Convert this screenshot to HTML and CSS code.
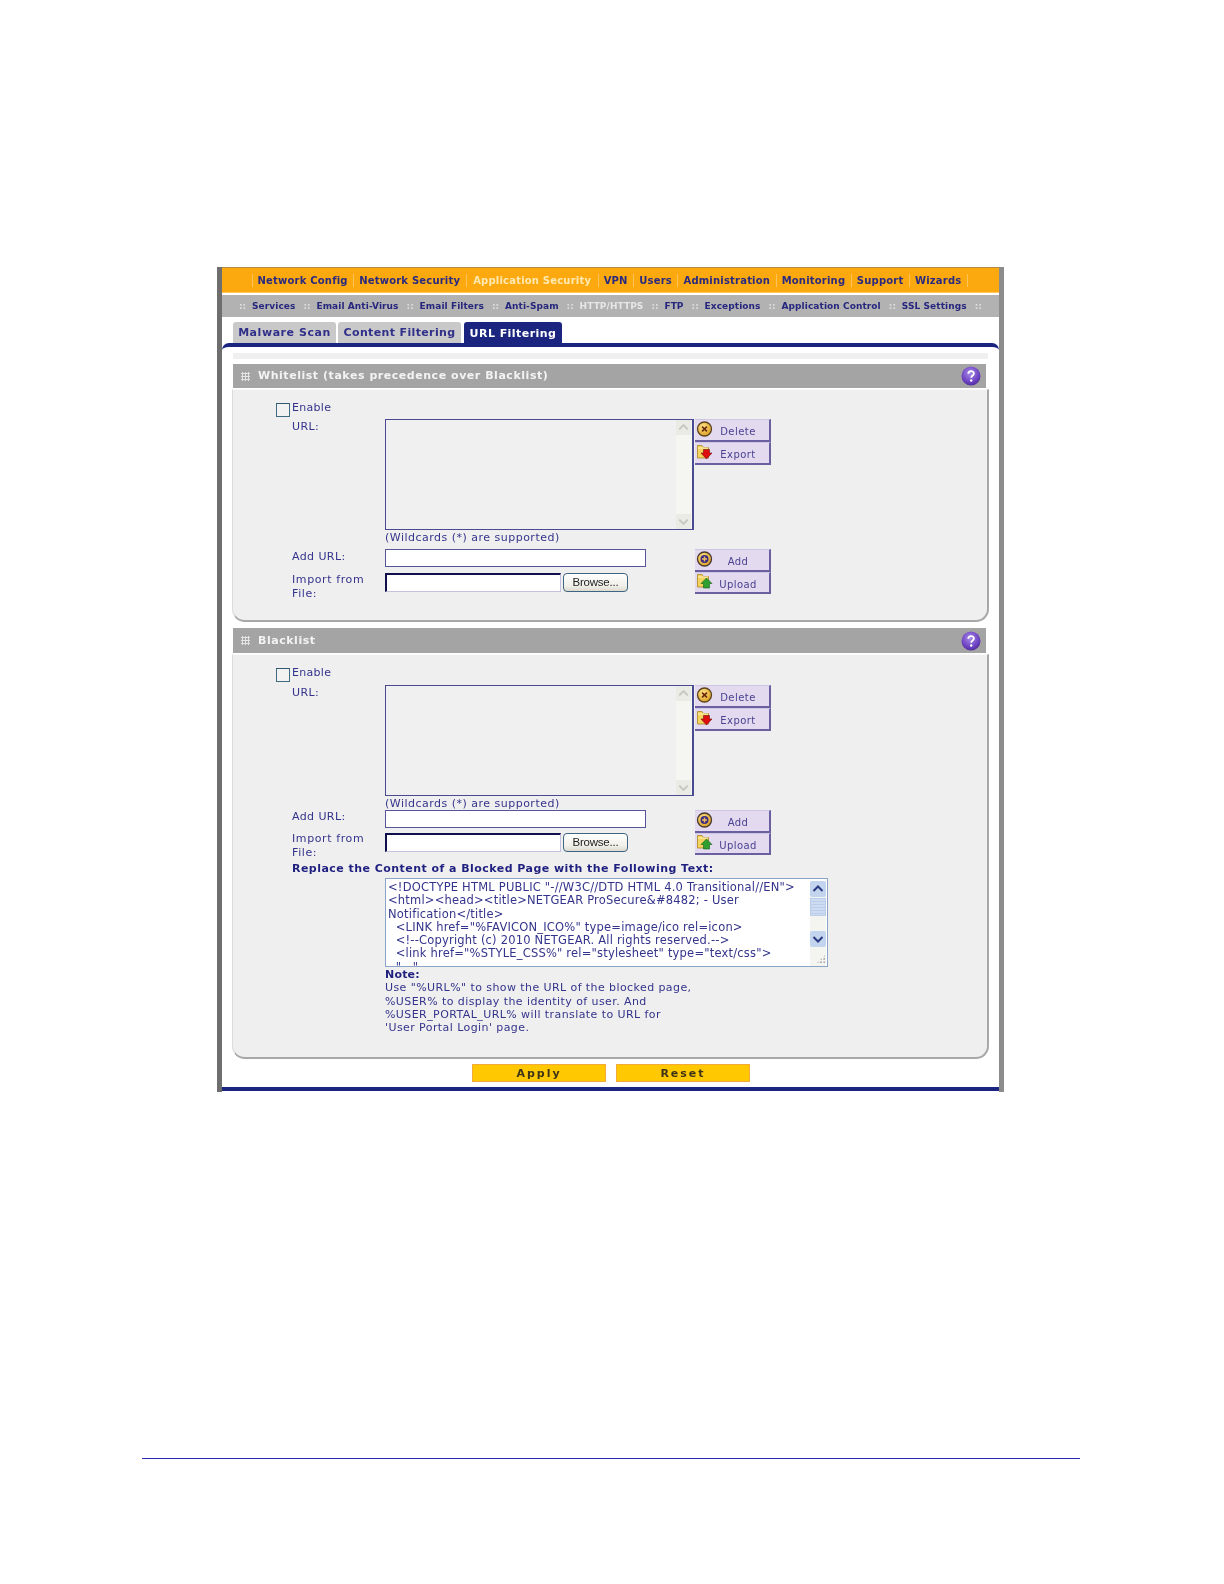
FILE: index.html
```html
<!DOCTYPE html>
<html lang="en">
<head>
<meta charset="utf-8">
<title>URL Filtering</title>
<link rel="stylesheet" href="styles.css">
</head>
<body>
<svg class="defs" width="0" height="0" aria-hidden="true">
  <defs>
    <radialGradient id="coin" cx="40%" cy="35%" r="70%"><stop offset="0" stop-color="#ffe58a"/><stop offset="1" stop-color="#d99a1c"/></radialGradient>
    <radialGradient id="orb" cx="45%" cy="35%" r="70%"><stop offset="0" stop-color="#a98be8"/><stop offset="0.7" stop-color="#6a3fc0"/><stop offset="1" stop-color="#4a2a90"/></radialGradient>
    <symbol id="i-x" viewBox="0 0 16 16"><circle cx="8" cy="8" r="7" fill="url(#coin)" stroke="#5a4420" stroke-width="1.3"/><path d="M5.600 5.600l4.800 4.800M10.400 5.600l-4.800 4.800" stroke="#6a2a10" stroke-width="1.600"/></symbol>
    <symbol id="i-plus" viewBox="0 0 16 16"><circle cx="8" cy="8" r="7" fill="url(#coin)" stroke="#4a3a30" stroke-width="1.3"/><circle cx="8" cy="8" r="4" fill="#3a2a80"/><path d="M8 5.500v5M5.500 8h5" stroke="#f2c060" stroke-width="1.400"/></symbol>
    <symbol id="i-export" viewBox="0 0 16 16"><path d="M1 1.500h4.500L7 3.500h5V14H1z" fill="#f4d35e" stroke="#a98420" stroke-width=".8"/><path d="M1.500 4h10" stroke="#fff4c0"/><path d="M7 5.500h6V9h2.500L10 15 4.500 9H7z" fill="#e00f0f" stroke="#701010" stroke-width=".6"/></symbol>
    <symbol id="i-upload" viewBox="0 0 16 16"><path d="M1 1.500h4.500L7 3.500h5V14H1z" fill="#f4d35e" stroke="#a98420" stroke-width=".8"/><path d="M1.500 4h10" stroke="#fff4c0"/><path d="M10 5l5.500 5.500H13V15H7v-4.500H4.500z" fill="#2fa02f" stroke="#146014" stroke-width=".6"/></symbol>
    <symbol id="i-help" viewBox="0 0 20 20"><circle cx="10" cy="10" r="9.500" fill="url(#orb)"/><path d="M7.300 7.700c0-3.300 5.600-3.300 5.600-.2 0 2-2.700 2.100-2.700 4.300" fill="none" stroke="#fff" stroke-width="1.800"/><circle cx="10.200" cy="14.500" r="1.200" fill="#fff"/></symbol>
    <symbol id="i-up" viewBox="0 0 16 16"><path d="M3.500 10L8 5.500l4.500 4.500" fill="none" stroke="currentColor" stroke-width="2"/></symbol>
    <symbol id="i-down" viewBox="0 0 16 16"><path d="M3.500 6L8 10.500 12.500 6" fill="none" stroke="currentColor" stroke-width="2"/></symbol>
  </defs>
</svg>

<main class="frame">
  <nav class="menu">
    <a>Network Config</a><a>Network Security</a><a class="on">Application Security</a><a>VPN</a><a>Users</a><a>Administration</a><a>Monitoring</a><a>Support</a><a>Wizards</a>
  </nav>
  <nav class="submenu">
    <i>::</i><a>Services</a><i>::</i><a>Email Anti-Virus</a><i>::</i><a>Email Filters</a><i>::</i><a>Anti-Spam</a><i>::</i><a class="on">HTTP/HTTPS</a><i>::</i><a>FTP</a><i>::</i><a>Exceptions</a><i>::</i><a>Application Control</a><i>::</i><a>SSL Settings</a><i>::</i>
  </nav>
  <div class="tabs">
    <a class="tab t1">Malware Scan</a><a class="tab t2">Content Filtering</a><a class="tab active">URL Filtering</a>
  </div>

  <section class="panel">
    <div class="strip"></div>

    <header class="sec-head"><span class="grip"></span><h2>Whitelist (takes precedence over Blacklist)</h2><svg class="help"><use href="#i-help"/></svg></header>
    <div class="sec-body white">
      <label class="enable"><span class="check"></span>Enable</label>
      <div class="form">
        <div class="lbl">URL:</div>
        <div class="list"><div class="bar"><svg class="cap"><use href="#i-up"/></svg><svg class="cap"><use href="#i-down"/></svg></div></div>
        <div class="btns">
          <a class="btn"><svg class="ico"><use href="#i-x"/></svg><span>Delete</span></a>
          <a class="btn"><svg class="ico"><use href="#i-export"/></svg><span>Export</span></a>
        </div>
        <div class="wild">(Wildcards (*) are supported)</div>
        <div class="lbl add-l">Add URL:</div>
        <div class="field"><div class="inp add"></div></div>
        <a class="btn solo"><svg class="ico"><use href="#i-plus"/></svg><span>Add</span></a>
        <div class="lbl imp-l">Import from File:</div>
        <div class="field filerow"><div class="inp file"></div><a class="browse">Browse...</a></div>
        <a class="btn up"><svg class="ico"><use href="#i-upload"/></svg><span>Upload</span></a>
      </div>
    </div>

    <header class="sec-head second"><span class="grip"></span><h2>Blacklist</h2><svg class="help"><use href="#i-help"/></svg></header>
    <div class="sec-body black">
      <label class="enable"><span class="check"></span>Enable</label>
      <div class="form">
        <div class="lbl">URL:</div>
        <div class="list"><div class="bar"><svg class="cap"><use href="#i-up"/></svg><svg class="cap"><use href="#i-down"/></svg></div></div>
        <div class="btns">
          <a class="btn"><svg class="ico"><use href="#i-x"/></svg><span>Delete</span></a>
          <a class="btn"><svg class="ico"><use href="#i-export"/></svg><span>Export</span></a>
        </div>
        <div class="wild tight">(Wildcards (*) are supported)</div>
        <div class="lbl add-l">Add URL:</div>
        <div class="field"><div class="inp add"></div></div>
        <a class="btn solo"><svg class="ico"><use href="#i-plus"/></svg><span>Add</span></a>
        <div class="lbl imp-l">Import from File:</div>
        <div class="field filerow"><div class="inp file"></div><a class="browse">Browse...</a></div>
        <a class="btn up"><svg class="ico"><use href="#i-upload"/></svg><span>Upload</span></a>
      </div>
      <h3 class="replace">Replace the Content of a Blocked Page with the Following Text:</h3>
      <div class="text-wrap">
        <div class="textarea">
          <pre class="code">&lt;!DOCTYPE HTML PUBLIC "-//W3C//DTD HTML 4.0 Transitional//EN"&gt;
&lt;html&gt;&lt;head&gt;&lt;title&gt;NETGEAR ProSecure&amp;#8482; - User
Notification&lt;/title&gt;
  &lt;LINK href="%FAVICON_ICO%" type=image/ico rel=icon&gt;
  &lt;!--Copyright (c) 2010 NETGEAR. All rights reserved.--&gt;
  &lt;link href="%STYLE_CSS%" rel="stylesheet" type="text/css"&gt;
  "   "</pre>
          <div class="sbar">
            <svg class="sb-btn"><use href="#i-up"/></svg>
            <span class="sb-thumb"></span>
            <svg class="sb-btn dn"><use href="#i-down"/></svg>
            <span class="sb-grip"></span>
          </div>
        </div>
        <div class="note">
          <strong>Note:</strong><br>
          Use "%URL%" to show the URL of the blocked page,<br>
          %USER% to display the identity of user. And<br>
          %USER_PORTAL_URL% will translate to URL for<br>
          'User Portal Login' page.
        </div>
      </div>
    </div>

    <div class="actions"><a class="action">Apply</a><a class="action">Reset</a></div>
  </section>
</main>
<hr class="rule">
</body>
</html>
```
FILE: styles.css
```css
* { box-sizing: border-box; }
html, body { margin: 0; padding: 0; background: #fff; }
body { font-family: "DejaVu Sans", Verdana, sans-serif; color: #34348c; width: 1224px; height: 1584px; overflow: hidden; }
.defs { position: absolute; }

.frame { width: 787px; height: 825px; margin: 267px 0 0 217px; border-left: 5px solid #6e6e6e; border-right: 5px solid #8c8c8c; background: #fff; filter: blur(.45px); }

.menu { display: flex; height: 26px; padding: 1px 0 0 29.500px; background: #fba90f; align-items: center; border-top: 1px solid #b08a40; border-bottom: 1px solid #ffc860; }
.menu a { font-size: 10px; font-weight: 700; letter-spacing: .2px; color: #2a2a80; padding: 0 5.500px 0 5px; height: 13px; line-height: 13px; border-left: 1px solid #fdc45a; white-space: nowrap; }
.menu a:last-child { border-right: 1px solid #fdc45a; }
.menu a.on { color: #ffe9b0; padding: 0 6.500px 0 6.500px; }

.submenu { display: flex; align-items: center; gap: 8px; height: 22px; margin-top: 2px; padding-left: 17px; background: #b2b2b2; white-space: nowrap; }
.submenu a { font-size: 9px; font-weight: 700; letter-spacing: .08px; color: #26267e; }
.submenu a.on { color: #e6e6e6; }
.submenu i { font-style: normal; font-size: 9px; font-weight: 700; color: #dcdcdc; width: 5px; }

.tabs { display: flex; gap: 2px; height: 25px; margin-top: 5px; padding-left: 11px; position: relative; z-index: 1; }
.tab { height: 21px; padding-top: 4px; border-radius: 3px 3px 0 0; font-size: 11px; font-weight: 700; letter-spacing: .55px; text-align: center; background: #c9c9c9; color: #30308a; white-space: nowrap; }
.t1 { width: 103px; }
.t2 { width: 123px; letter-spacing: .36px; }
.tab.active { width: 98px; height: 25px; padding-top: 5px; background: #1b2580; color: #fff; margin-left: 1px; letter-spacing: .45px; }

.panel { width: 777px; height: 748px; margin-top: -4px; padding: 0 11px; border-top: 4px solid #1b2580; border-bottom: 4px solid #1b2580; border-radius: 7px 7px 0 0; background: #fff; }
.strip { height: 6px; margin: 6px 0 5px; background: #f0f0f0; width: 755px; }

.sec-head { display: flex; align-items: center; width: 753px; height: 24px; background: #a4a4a4; padding: 0 5px 0 8px; }
.sec-head.second { margin-top: 6px; height: 25px; }
.sec-head h2 { margin: 0 0 1px 8px; flex: 1; font-size: 11px; font-weight: 700; letter-spacing: .54px; color: #f3f3f3; }
.grip { width: 9px; height: 9px; background-image: radial-gradient(#e4e4e4 1px, transparent 1.100px); background-size: 3px 3px; }
.help { width: 20px; height: 20px; }

.sec-body { width: 757px; margin: 1px 0 0 -1px; padding: 11px 0 0 43px; background: #efefef; border: 1px solid #dcdcdc; border-top: 1px solid #fafafa; border-right: 2px solid #a8a8a8; border-bottom: 2px solid #a8a8a8; border-radius: 0 0 13px 13px; }
.sec-body.white { height: 233px; }
.sec-body.black { height: 405px; }

.enable { display: flex; align-items: flex-start; height: 14px; font-size: 11px; line-height: 14px; letter-spacing: .3px; }
.check { width: 14px; height: 14px; margin: 2px 2px 0 0; background: #f2f2f2; border: 1px solid #3f6a80; border-top-color: #2f5a70; }

.form { display: grid; grid-template-columns: 93px 309px 77px; margin: 4px 0 0 16px; align-items: start; }
.black .form { margin-top: 5px; }
.lbl { font-size: 11px; line-height: 14px; letter-spacing: .4px; padding-top: 1px; }
.imp-l { padding-top: 0; width: 84px; letter-spacing: .6px; }
.black .add-l { margin-top: -1px; }
.black .imp-l { margin-top: -2px; }

.list { display: flex; justify-content: flex-end; height: 111px; background: #f0f0f0; border: 1px solid #4a4a92; border-right-width: 2px; }
.bar { display: flex; flex-direction: column; justify-content: space-between; width: 16px; padding-right: 1px; background: #f5f5f2; }
.cap { display: block; width: 15px; height: 15px; background: #ebebe6; color: #c6c6c2; }

.btns { display: flex; flex-direction: column; padding-left: 1px; }
.btn { display: flex; align-items: center; height: 23px; padding: 0 0 0 1px; background: #e3daf0; border-right: 2px solid #6a5fa0; border-bottom: 2px solid #6a5fa0; border-top: 1px solid #cfc6e4; font-size: 10px; letter-spacing: .45px; color: #4b418f; }
.btn span { flex: 1; text-align: center; padding: 3px 6px 0 0; }
.btn .ico { width: 17px; height: 16px; margin-top: -3px; }
.form > .btn { margin-left: 1px; }
.form > .up { margin-top: -1px; height: 22px; }

.wild { grid-column: 2 / 4; height: 19px; font-size: 11px; line-height: 14px; letter-spacing: .49px; padding-top: 1px; }
.wild.tight { height: 14px; }

.field { min-height: 24px; }
.inp { background: #fff; }
.add { width: 261px; height: 18px; border: 1.500px solid #55559a; }
.filerow { display: flex; gap: 2px; }
.black .filerow { margin-top: -1px; }
.file { width: 176px; height: 19px; border: 1px solid #c2c2de; border-top: 2px solid #10104a; border-left: 2px solid #10104a; }
.browse { width: 65px; height: 19px; font-family: "Liberation Sans", Arial, sans-serif; font-size: 11.500px; line-height: 17px; letter-spacing: -.2px; text-align: center; color: #222; border: 1.500px solid #3d6480; border-radius: 4px; background: linear-gradient(#fff, #f0efe8 70%, #dcdad0); }

.replace { margin: 2px 0 0 16px; height: 14px; font-size: 11px; line-height: 14px; font-weight: 700; letter-spacing: .46px; color: #1f1f80; }
.text-wrap { margin: 2px 0 0 109px; }
.textarea { display: flex; width: 443px; height: 89px; overflow: hidden; background: #fff; border: 1px solid #8ba3c6; }
.code { flex: 1; margin: 0; padding: 2px 0 0 2px; font-family: "DejaVu Sans", sans-serif; font-size: 11.500px; line-height: 13.300px; letter-spacing: .2px; color: #34348c; white-space: pre; overflow: hidden; }
.sbar { display: flex; flex-direction: column; width: 16px; margin: 2px 1px 0 0; background: #f4f5f0; flex: none; }
.sb-btn { display: block; width: 16px; height: 16px; flex: none; color: #2a3a80; background: #c3d4ef; border-radius: 2px; }
.sb-btn.dn { margin-top: 15px; }
.sb-thumb { height: 18px; margin-top: 1px; background: repeating-linear-gradient(#cddcf3 0 2px, #bccdea 2px 3px); border: 1px solid #bccdea; }
.sb-grip { align-self: flex-end; width: 10px; height: 10px; margin-top: 7px; background-image: radial-gradient(#a8a8a8 .8px, transparent 1px); background-size: 3.300px 3.300px; clip-path: polygon(100% 0, 100% 100%, 0 100%); }
.note { margin-top: 1px; font-size: 11px; line-height: 13.300px; letter-spacing: .42px; color: #34348c; }
.note strong { color: #1f1f80; letter-spacing: .2px; }

.actions { display: flex; gap: 10px; justify-content: center; margin: 5px 0 0 1px; }
.action { width: 134px; height: 18px; font-size: 11px; line-height: 18px; font-weight: 700; letter-spacing: 2px; text-align: center; color: #3e3418; background: #ffc800; border: 1px solid #f4a93c; }

.rule { width: 938px; height: 1px; margin: 366px 0 0 142px; padding: 0; border: 0; background: #2a2ab4; }
```
